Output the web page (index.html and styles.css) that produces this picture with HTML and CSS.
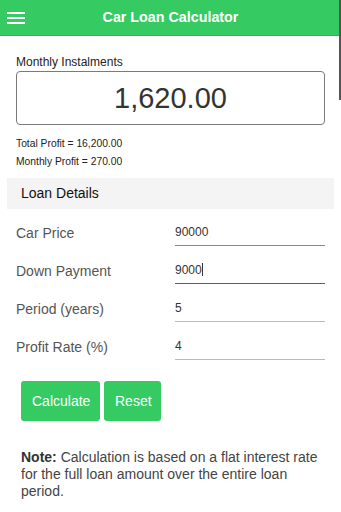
FILE: index.html
```html
<!DOCTYPE html>
<html>
<head>
<meta charset="utf-8">
<link rel="stylesheet" href="styles.css">
</head>
<body>
<div class="app">
  <header class="topbar">
    <div class="menu"><span></span><span></span><span></span></div>
    <h1 class="title">Car Loan Calculator</h1>
  </header>
  <div class="scroll-thumb"></div>

  <section class="summary">
    <div class="summary-label">Monthly Instalments</div>
    <div class="result-box">1,620.00</div>
    <div class="profit profit-first">Total Profit = 16,200.00</div>
    <div class="profit">Monthly Profit = 270.00</div>
  </section>

  <div class="section-head">Loan Details</div>

  <div class="rows">
    <div class="row">
      <div class="label">Car Price</div>
      <div class="field f1">90000</div>
    </div>
    <div class="row">
      <div class="label">Down Payment</div>
      <div class="field focused">9000<span class="caret"></span></div>
    </div>
    <div class="row">
      <div class="label">Period (years)</div>
      <div class="field f3">5</div>
    </div>
    <div class="row">
      <div class="label">Profit Rate (%)</div>
      <div class="field f3">4</div>
    </div>
  </div>

  <div class="buttons">
    <button class="btn btn-calc">Calculate</button>
    <button class="btn btn-reset">Reset</button>
  </div>

  <p class="note"><b>Note:</b> Calculation is based on a flat interest rate for the full loan amount over the entire loan period.</p>
</div>
</body>
</html>
```
FILE: styles.css
```css
* { box-sizing: border-box; }
html, body { margin: 0; padding: 0; background: #fff; }
body { font-family: "Liberation Sans", Arial, sans-serif; color: #333; }
.app { position: relative; width: 341px; min-height: 512px; }

.topbar {
  height: 36px;
  background: #35cb62;
  border-bottom: 1px solid #2fb658;
  display: flex;
  align-items: center;
  position: relative;
}
.menu {
  position: absolute;
  left: 7px;
  top: 12px;
  width: 18px;
  display: flex;
  flex-direction: column;
  gap: 3px;
}
.menu span { display: block; height: 2px; background: #fff; }
.title {
  flex: 1;
  margin: 0;
  text-align: center;
  color: #fff;
  font-size: 14.3px;
  font-weight: bold;
  line-height: 35px;
}
.scroll-thumb {
  position: absolute;
  right: 0;
  top: 0;
  width: 2px;
  height: 100px;
  background: #555;
}

.summary { padding: 18px 16px 0 16px; }
.summary-label { font-size: 12px; line-height: 16px; color: #222; }
.result-box {
  margin-top: 1px;
  height: 54px;
  border: 1px solid #7a7a7a;
  border-radius: 4px;
  font-size: 29px;
  line-height: 52px;
  text-align: center;
  color: #333;
}
.profit { font-size: 10.3px; line-height: 18px; color: #222; }
.profit-first { margin-top: 10px; }

.section-head {
  margin: 7px 7px 0 7px;
  height: 31px;
  background: #f4f4f4;
  padding-left: 14px;
  font-size: 14px;
  line-height: 31px;
  color: #111;
}

.rows {
  padding: 11px 16px 0 16px;
  display: flex;
  flex-direction: column;
  gap: 12px;
}
.row { display: flex; align-items: center; height: 26px; }
.label { width: 159px; font-size: 14px; color: #555; }
.field {
  flex: 1;
  height: 26px;
  line-height: 25px;
  font-size: 12px;
  color: #333;
  border-bottom: 1px solid #6a9d6a;
}
.field.focused { border-bottom-color: #2e7d32; }
.field.f3 { border-bottom-color: #a8c8a8; }
.caret {
  display: inline-block;
  width: 1px;
  height: 13px;
  background: #333;
  vertical-align: -2px;
}

.buttons {
  margin: 21px 0 0 21px;
  display: flex;
  gap: 4px;
}
.btn {
  height: 40px;
  border: none;
  border-radius: 3px;
  background: #35cb62;
  color: #fff;
  font-family: "Liberation Sans", Arial, sans-serif;
  font-size: 14px;
  padding: 0 11px;
}
.btn-calc { width: 79px; }
.btn-reset { width: 57px; }

.note {
  margin: 28px 21px 0 21px;
  font-size: 14px;
  line-height: 17px;
  color: #444;
}
.note b { color: #333; }
```
